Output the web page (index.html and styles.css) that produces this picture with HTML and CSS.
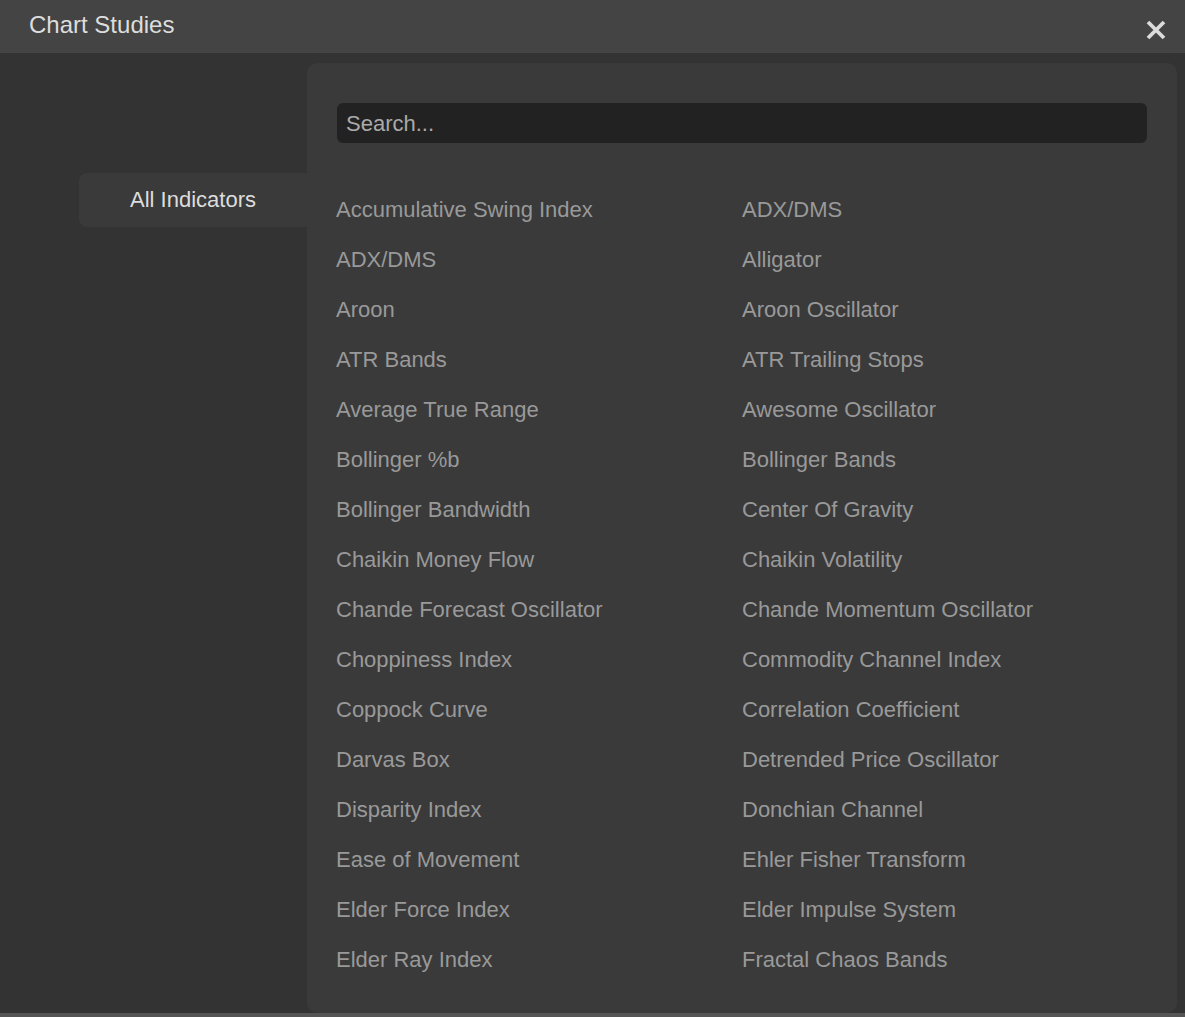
FILE: index.html
```html
<!DOCTYPE html>
<html lang="en">
<head>
<meta charset="utf-8">
<title>Chart Studies</title>
<link rel="stylesheet" href="styles.css">
</head>
<body>
<div class="dialog">
  <header class="dialog-header">
    <h1 class="dialog-title">Chart Studies</h1>
    <button class="close-btn" aria-label="Close">
      <svg width="22" height="22" viewBox="0 0 22 22"><path d="M3 3 L19 19 M19 3 L3 19" stroke="#dcdcdc" stroke-width="3.8" stroke-linecap="butt"/></svg>
    </button>
  </header>
  <div class="dialog-body">
    <nav class="sidebar">
      <div class="tab active">All Indicators</div>
    </nav>
    <main class="panel">
      <input class="search" type="text" placeholder="Search...">
      <ul class="study-list">
        <li>Accumulative Swing Index</li>
        <li>ADX/DMS</li>
        <li>ADX/DMS</li>
        <li>Alligator</li>
        <li>Aroon</li>
        <li>Aroon Oscillator</li>
        <li>ATR Bands</li>
        <li>ATR Trailing Stops</li>
        <li>Average True Range</li>
        <li>Awesome Oscillator</li>
        <li>Bollinger %b</li>
        <li>Bollinger Bands</li>
        <li>Bollinger Bandwidth</li>
        <li>Center Of Gravity</li>
        <li>Chaikin Money Flow</li>
        <li>Chaikin Volatility</li>
        <li>Chande Forecast Oscillator</li>
        <li>Chande Momentum Oscillator</li>
        <li>Choppiness Index</li>
        <li>Commodity Channel Index</li>
        <li>Coppock Curve</li>
        <li>Correlation Coefficient</li>
        <li>Darvas Box</li>
        <li>Detrended Price Oscillator</li>
        <li>Disparity Index</li>
        <li>Donchian Channel</li>
        <li>Ease of Movement</li>
        <li>Ehler Fisher Transform</li>
        <li>Elder Force Index</li>
        <li>Elder Impulse System</li>
        <li>Elder Ray Index</li>
        <li>Fractal Chaos Bands</li>
      </ul>
    </main>
  </div>
</div>
</body>
</html>
```
FILE: styles.css
```css
html, body {
  margin: 0;
  padding: 0;
  background: #555555;
  height: 100%;
  overflow: hidden;
}
body {
  font-family: "Liberation Sans", Arial, sans-serif;
}
.dialog {
  width: 1185px;
  height: 1013px;
  background: #333333;
  display: flex;
  flex-direction: column;
  overflow: hidden;
}
.dialog-header {
  height: 53px;
  box-sizing: border-box;
  background: #444444;
  display: flex;
  align-items: center;
  padding: 0 0 3px 29px;
  flex: none;
}
.dialog-title {
  margin: 0;
  font-size: 24px;
  font-weight: normal;
  color: #dddddd;
}
.close-btn {
  margin-left: auto;
  margin-right: 18px;
  margin-top: 9px;
  width: 22px;
  height: 22px;
  padding: 0;
  border: 0;
  background: none;
  display: flex;
}
.dialog-body {
  flex: 1;
  display: flex;
  min-height: 0;
}
.sidebar {
  width: 307px;
  flex: none;
  padding-top: 120px;
  padding-left: 79px;
  box-sizing: border-box;
}
.tab {
  height: 54px;
  display: flex;
  align-items: center;
  justify-content: center;
  background: #3a3a3a;
  border-radius: 8px 0 0 8px;
  color: #dddddd;
  font-size: 22px;
}
.panel {
  flex: 1;
  margin: 10px 8px 0 0;
  background: #3a3a3a;
  border-radius: 10px;
  padding: 40px 30px 0 30px;
  display: flex;
  flex-direction: column;
}
.search {
  height: 40px;
  box-sizing: border-box;
  width: 100%;
  background: #222222;
  border: 0;
  border-radius: 6px;
  padding: 2px 9px 0 9px;
  font-family: "Liberation Sans", Arial, sans-serif;
  font-size: 22px;
  color: #dddddd;
  outline: none;
}
.search::placeholder {
  color: #aaaaaa;
}
.study-list {
  list-style: none;
  margin: 42px 0 0 -1px;
  padding: 0;
  display: grid;
  grid-template-columns: 406px 1fr;
}
.study-list li {
  line-height: 50px;
  font-size: 22px;
  color: #999999;
  white-space: nowrap;
}
```
